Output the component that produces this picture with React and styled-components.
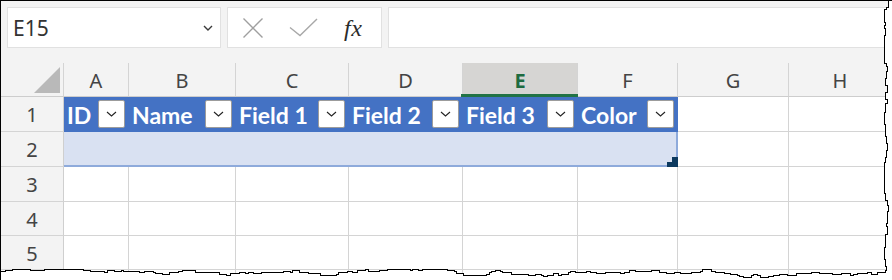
import React from 'react';
import styled, { createGlobalStyle } from 'styled-components';

const Global = createGlobalStyle`
  html, body { margin: 0; padding: 0; background: #ffffff; }
  body { width: 892px; height: 280px; overflow: hidden; }
  * { box-sizing: border-box; }
`;

const Page = styled.div`
  position: relative;
  width: 892px;
  height: 280px;
  border-top: 1px solid #000;
  border-left: 1px solid #000;
  background: #f3f3f3;
  font-family: "Noto Sans", "Open Sans", sans-serif;
  overflow: hidden;
`;

const FormulaBar = styled.div`
  display: flex;
  gap: 6px;
  padding: 6px 0 0 6px;
  height: 47px;
`;

const Box = styled.div`
  height: 41px;
  background: #ffffff;
  border: 1px solid #e1e1e1;
  display: flex;
  align-items: center;
`;

const NameBox = styled(Box)`
  width: 214px;
  justify-content: space-between;
  padding: 0 7px 0 5px;
  font-size: 21px;
  color: #333333;
`;

const FxBox = styled(Box)`
  width: 155px;
  padding-left: 14px;
`;

const FxText = styled.span`
  font-family: "Liberation Serif", "DejaVu Serif", serif;
  font-style: italic;
  font-size: 24px;
  color: #2b2b2b;
  margin-left: 26px;
  letter-spacing: 0.5px;
  line-height: 1;
`;

const FormulaInput = styled(Box)`
  flex: 1;
`;

const Grid = styled.div`
  display: grid;
  grid-template-columns: 63px 65px 107px 113px 114px 115px 100px 111px 1fr;
  grid-template-rows: 34px 35px 35px 35px 34px 34px 34px;
  margin-top: 15px;
`;

const Corner = styled.div`
  background: #f3f3f3;
  border-right: 1px solid #d4d4d4;
  border-bottom: 1px solid #cdcdcd;
  display: flex;
  align-items: flex-end;
  justify-content: flex-end;
  padding: 0 3px 3px 0;
`;

const Triangle = styled.div`
  width: 26px;
  height: 26px;
  background: #b9b9b9;
  clip-path: polygon(100% 0, 100% 100%, 0 100%);
`;

const ColHeader = styled.div`
  position: relative;
  background: ${(p) => (p.$selected ? '#d6d5d3' : '#f3f3f3')};
  border-right: 1px solid #d4d4d4;
  border-bottom: 1px solid #cdcdcd;
  display: flex;
  align-items: center;
  justify-content: center;
  font-size: 20px;
  font-weight: ${(p) => (p.$selected ? 700 : 400)};
  color: ${(p) => (p.$selected ? '#1d6b40' : '#444444')};
  padding-top: 1px;

  ${(p) =>
    p.$selected &&
    `&::after {
      content: '';
      position: absolute;
      left: -2px;
      right: -1px;
      bottom: -1px;
      height: 3px;
      background: #217346;
    }`}
`;

const RowHeader = styled.div`
  background: #f3f3f3;
  border-right: 1px solid #cfcfcf;
  border-bottom: 1px solid #d4d4d4;
  display: flex;
  align-items: center;
  justify-content: center;
  font-size: 20px;
  color: #444444;
  padding-top: 1px;
`;

const Cell = styled.div`
  background: #ffffff;
  border-right: 1px solid #d4d4d4;
  border-bottom: 1px solid #d4d4d4;
`;

const TableHeader = styled.div`
  grid-column: span 6;
  display: grid;
  grid-template-columns: 65px 107px 113px 114px 115px 100px;
  background: #4472c4;
`;

const FieldCell = styled.div`
  display: flex;
  align-items: center;
  padding: 0 4px 0 3px;
  font-family: Lato, "Open Sans", sans-serif;
  font-weight: 700;
  font-size: 23px;
  color: #ffffff;
  white-space: nowrap;
`;

const FilterButton = styled.div`
  margin-left: auto;
  flex: none;
  width: 27px;
  height: 28px;
  background: #ffffff;
  border: 1px solid #9c9c9c;
  border-radius: 2px;
  display: flex;
  align-items: center;
  justify-content: center;
  margin-top: -1px;
`;

const TableRow = styled.div`
  grid-column: span 6;
  position: relative;
  background: #d9e1f2;
  border-bottom: 2px solid #8eaadb;
  border-right: 2px solid #8eaadb;
`;

const ResizeHandle = styled.svg`
  position: absolute;
  right: -2px;
  bottom: -2px;
  width: 11px;
  height: 10px;
`;

const TornEdge = styled.svg`
  position: absolute;
  left: -1px;
  top: -1px;
  width: 892px;
  height: 280px;
  pointer-events: none;
`;

const Chevron = ({ w = 9, h = 5, color = '#333', sw = 1.2 }) => (
  <svg width={w + 2} height={h + 2} viewBox={`-1 -1 ${w + 2} ${h + 2}`}>
    <polyline points={`0,0 ${w / 2},${h} ${w},0`} fill="none" stroke={color} strokeWidth={sw} />
  </svg>
);

const CancelIcon = () => (
  <svg width="22" height="22" viewBox="0 0 22 22">
    <path d="M1.5 1.5 L20.5 20.5 M20.5 1.5 L1.5 20.5" stroke="#9f9f9f" strokeWidth="1.4" fill="none" />
  </svg>
);

const EnterIcon = () => (
  <svg width="29" height="19" viewBox="0 0 29 19" style={{ marginLeft: 25 }}>
    <path d="M1 9.5 L11 17.5 L28 1" stroke="#a8a8a8" strokeWidth="1.4" fill="none" />
  </svg>
);

function makeEdge() {
  let s = 12345;
  const r = () => {
    s = (s * 16807) % 2147483647;
    return (s - 1) / 2147483646;
  };
  const pts = [];
  let x = 887;
  let y = -2;
  pts.push([x, y]);
  while (y < 270) {
    y += 2 + Math.floor(r() * 6);
    if (y > 270) y = 270;
    pts.push([x, y]);
    x += Math.round((r() - 0.5) * 4);
    x = Math.max(884, Math.min(890, x));
    pts.push([x, y]);
  }
  let by = 272;
  let bx = x;
  pts.push([bx, by]);
  while (bx > -2) {
    bx -= 2 + Math.floor(r() * 8);
    if (bx < -2) bx = -2;
    pts.push([bx, by]);
    by += Math.round((r() - 0.5) * 4);
    by = Math.max(269, Math.min(277, by));
    pts.push([bx, by]);
  }
  return pts;
}

const EDGE = makeEdge();
const EDGE_LINE = EDGE.map((p) => `${p[0] + 0.5},${p[1] + 0.5}`).join(' ');
const EDGE_FILL = `M 900,-5 L ${EDGE_LINE} L -5,290 L 900,290 Z`;

const COLS = ['A', 'B', 'C', 'D', 'E', 'F', 'G', 'H'];
const FIELDS = ['ID', 'Name', 'Field 1', 'Field 2', 'Field 3', 'Color'];

export default function App() {
  return (
    <>
      <Global />
      <Page>
        <FormulaBar>
          <NameBox>
            <span>E15</span>
            <Chevron w={8} h={4} color="#3a3a3a" sw={1.4} />
          </NameBox>
          <FxBox>
            <CancelIcon />
            <EnterIcon />
            <FxText>fx</FxText>
          </FxBox>
          <FormulaInput />
        </FormulaBar>

        <Grid>
          <Corner>
            <Triangle />
          </Corner>
          {COLS.map((c) => (
            <ColHeader key={c} $selected={c === 'E'}>
              {c}
            </ColHeader>
          ))}

          <RowHeader>1</RowHeader>
          <TableHeader>
            {FIELDS.map((f) => (
              <FieldCell key={f}>
                {f}
                <FilterButton>
                  <Chevron w={9} h={4} color="#222" sw={1.1} />
                </FilterButton>
              </FieldCell>
            ))}
          </TableHeader>
          <Cell />
          <Cell />

          <RowHeader>2</RowHeader>
          <TableRow>
            <ResizeHandle viewBox="0 0 11 10">
              <path d="M5 0 H11 V10 H0 V5 H5 Z" fill="#0d3a5f" />
            </ResizeHandle>
          </TableRow>
          <Cell />
          <Cell />

          {[3, 4, 5].map((n) => (
            <React.Fragment key={n}>
              <RowHeader>{n}</RowHeader>
              {COLS.map((c) => (
                <Cell key={c} />
              ))}
            </React.Fragment>
          ))}
          <RowHeader />
          {COLS.map((c) => (
            <Cell key={`r6${c}`} />
          ))}
        </Grid>

        <TornEdge viewBox="0 0 892 280">
          <path d={EDGE_FILL} fill="#ffffff" />
          <polyline points={EDGE_LINE} fill="none" stroke="#000" strokeWidth="1" shapeRendering="crispEdges" />
        </TornEdge>
      </Page>
    </>
  );
}
